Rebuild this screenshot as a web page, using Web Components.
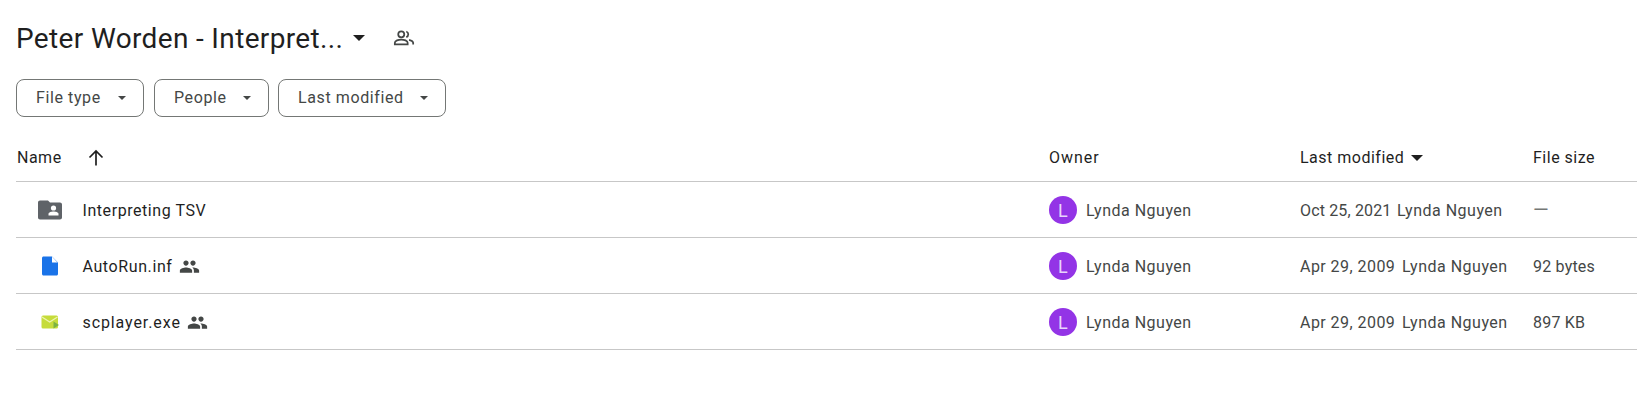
<!DOCTYPE html>
<html>
<head>
<meta charset="utf-8">
<title>Drive folder</title>
<style>
  body { margin: 0; background: #fff; font-family: Roboto, "Liberation Sans", sans-serif; color: #1f1f1f; }
</style>
</head>
<body>
<drive-page>
  <folder-title slot="title">Peter Worden - Interpret...</folder-title>
  <filter-chip slot="filters" style="width:128px">File type</filter-chip>
  <filter-chip slot="filters" style="width:115px">People</filter-chip>
  <filter-chip slot="filters" style="width:168px;margin-left:-1px">Last modified</filter-chip>
  <table-head slot="table"></table-head>
  <file-row slot="table" style="--name-spacing:.56px;--date-spacing:.15px" icon="folder" name="Interpreting TSV" date="Oct 25, 2021" date-width="97" size="—"></file-row>
  <file-row slot="table" style="--name-spacing:.6px" icon="doc" shared name="AutoRun.inf" date="Apr 29, 2009" date-width="102" size="92 bytes"></file-row>
  <file-row slot="table" style="--name-spacing:.9px" icon="exe" shared name="scplayer.exe" date="Apr 29, 2009" date-width="102" size="897 KB"></file-row>
</drive-page>

<script>
const peopleIcon = `<svg class="people" width="21" height="21" viewBox="0 0 24 24" fill="#444746"><path d="M16 11c1.66 0 2.99-1.34 2.99-3S17.66 5 16 5s-3 1.34-3 3 1.34 3 3 3zm-8 0c1.66 0 2.99-1.34 2.99-3S9.66 5 8 5 5 6.34 5 8s1.34 3 3 3zm0 2c-2.33 0-7 1.17-7 3.5V19h14v-2.5C15 14.17 10.33 13 8 13zm8 0c-.29 0-.62.02-.97.05 1.16.84 1.97 1.97 1.97 3.45V19h6v-2.5c0-2.33-4.67-3.5-7-3.5z"/></svg>`;

const peopleOutline = `<svg class="people" width="22" height="22" viewBox="0 0 24 24" fill="none" stroke="#444746" stroke-width="1.900"><circle cx="9" cy="8" r="3.300"/><path d="M2 19v-1.800C2 15 6 13.700 9 13.700s7 1.300 7 3.500V19z"/><path d="M14.500 4.900a3.300 3.300 0 0 1 0 6.200M17.500 14c2.300.6 4.500 1.700 4.500 3.300V19"/></svg>`;

const fileIcons = {
  folder: `<svg width="24" height="24" viewBox="0 0 24 24"><path fill="#5f6368" d="M10 2.500H2C.9 2.500 0 3.400 0 4.500v15c0 1.100.9 2 2 2h20c1.100 0 2-.9 2-2V6.500c0-1.100-.9-2-2-2H12z"/><circle cx="15.500" cy="10" r="2.600" fill="#fff"/><path fill="#fff" d="M10.500 17.500v-1.500c0-1.600 3.200-2.400 5-2.400s5 .8 5 2.400v1.500z"/></svg>`,
  doc: `<svg width="24" height="24" viewBox="0 0 24 24"><path fill="#1a73e8" d="M5.500 3h8.500l6 6v11.500c0 .8-.7 1.500-1.500 1.500H5.500c-.8 0-1.500-.7-1.500-1.500v-16C4 3.700 4.700 3 5.500 3z" transform="translate(0 -.5)"/><path fill="#fff" d="M14 2.500v6h5.500z"/></svg>`,
  exe: `<svg width="24" height="24" viewBox="0 0 24 24"><rect x="3.500" y="5.500" width="16.500" height="13" rx="1.500" fill="#c6dc3a"/><path fill="none" stroke="#eef5b0" stroke-width="1.200" d="M4 7l7.700 5L19.500 7"/><path fill="#7cb342" d="M15.500 11.500l5.500 3.500-5.500 3.500z"/></svg>`
};

class DrivePage extends HTMLElement {
  constructor() {
    super();
    this.attachShadow({ mode: 'open' });
    this.shadowRoot.innerHTML = `
      <style>
        :host { display: block; padding: 15px 0 0 16px; }
        .filters { display: flex; gap: 10px; margin-top: 18px; }
        .table { margin-top: 17px; }
      </style>
      <slot name="title"></slot>
      <div class="filters"><slot name="filters"></slot></div>
      <div class="table"><slot name="table"></slot></div>
    `;
  }
}

class FolderTitle extends HTMLElement {
  constructor() {
    super();
    this.attachShadow({ mode: 'open' });
    this.shadowRoot.innerHTML = `
      <style>
        :host { display: flex; align-items: center; height: 46px; font-size: 28px; letter-spacing: .35px; color: #1f1f1f; }
        .caret { width: 0; height: 0; border: 6.500px solid transparent; border-top-color: #1f1f1f; border-bottom: 0; margin-left: 10px; }
        svg { margin-left: 28px; }
      </style>
      <span><slot></slot></span>
      <span class="caret"></span>
      ${peopleOutline}
    `;
  }
}

class FilterChip extends HTMLElement {
  constructor() {
    super();
    this.attachShadow({ mode: 'open' });
    this.shadowRoot.innerHTML = `
      <style>
        :host { display: flex; align-items: center; justify-content: space-between; box-sizing: border-box; height: 38px; padding: 0 17px 1px 19px; border: 1px solid #747775; border-radius: 8px; font-size: 16px; letter-spacing: .6px; color: #444746; }
        .caret { width: 0; height: 0; border: 4.500px solid transparent; border-top-color: #444746; border-bottom: 0; margin-top: 1px; }
      </style>
      <span><slot></slot></span>
      <span class="caret"></span>
    `;
  }
}

const gridColumns = 'grid-template-columns: 1033px 251px 233px 1fr;';

class TableHead extends HTMLElement {
  constructor() {
    super();
    this.attachShadow({ mode: 'open' });
    this.shadowRoot.innerHTML = `
      <style>
        :host { display: grid; ${gridColumns} height: 47px; align-items: center; border-bottom: 1px solid #c7c7c7; font-size: 16px; letter-spacing: .5px; color: #1f1f1f; }
        .name { display: flex; align-items: center; padding-left: 1px; gap: 22px; }
        .owner { letter-spacing: 1px; }
        .mod { display: flex; align-items: center; gap: 6px; }
        .caret { width: 0; height: 0; border: 6.500px solid transparent; border-top-color: #1f1f1f; border-bottom: 0; margin-left: 1px; }
      </style>
      <div class="name">Name
        <svg width="24" height="24" viewBox="0 0 24 24" fill="none" stroke="#1f1f1f" stroke-width="1.700"><path d="M12 19.500V5.500M5.500 11.500L12 5l6.500 6.500"/></svg>
      </div>
      <div class="owner">Owner</div>
      <div class="mod">Last modified <span class="caret"></span></div>
      <div>File size</div>
    `;
  }
}

class FileRow extends HTMLElement {
  constructor() {
    super();
    this.attachShadow({ mode: 'open' });
    const name = this.getAttribute('name');
    const icon = this.getAttribute('icon');
    const date = this.getAttribute('date');
    const dateWidth = this.getAttribute('date-width');
    const size = this.getAttribute('size');
    const shared = this.hasAttribute('shared') ? peopleIcon : '';
    const sizeClass = size === '—' ? 'dash' : 'size';
    this.shadowRoot.innerHTML = `
      <style>
        :host { display: grid; ${gridColumns} box-sizing: content-box; height: 54px; padding-top: 1px; align-items: center; border-bottom: 1px solid #c7c7c7; font-size: 16px; letter-spacing: .5px; color: #444746; }
        .name { display: flex; align-items: center; color: #1f1f1f; letter-spacing: var(--name-spacing, .5px); }
        .icon { display: flex; width: 24px; height: 24px; margin: 0 20.500px 0 22px; }
        .people { margin-left: 6px; }
        .owner { display: flex; align-items: center; gap: 9px; }
        .avatar { width: 28px; height: 28px; border-radius: 50%; background: #9334e6; color: #e8d5fb; font-size: 18px; display: flex; align-items: center; justify-content: center; }
        .modified { display: flex; }
        .date { white-space: nowrap; width: ${dateWidth}px; letter-spacing: var(--date-spacing, .45px); }
        .size { letter-spacing: .2px; }
        .dash { font-size: 20px; color: #747775; line-height: 1; }
      </style>
      <div class="name"><span class="icon">${fileIcons[icon]}</span><span>${name}</span>${shared}</div>
      <div class="owner"><span class="avatar">L</span>Lynda Nguyen</div>
      <div class="modified"><span class="date">${date}</span><span>Lynda Nguyen</span></div>
      <div class="${sizeClass}">${size}</div>
    `;
  }
}

customElements.define('drive-page', DrivePage);
customElements.define('folder-title', FolderTitle);
customElements.define('filter-chip', FilterChip);
customElements.define('table-head', TableHead);
customElements.define('file-row', FileRow);
</script>
</body>
</html>
